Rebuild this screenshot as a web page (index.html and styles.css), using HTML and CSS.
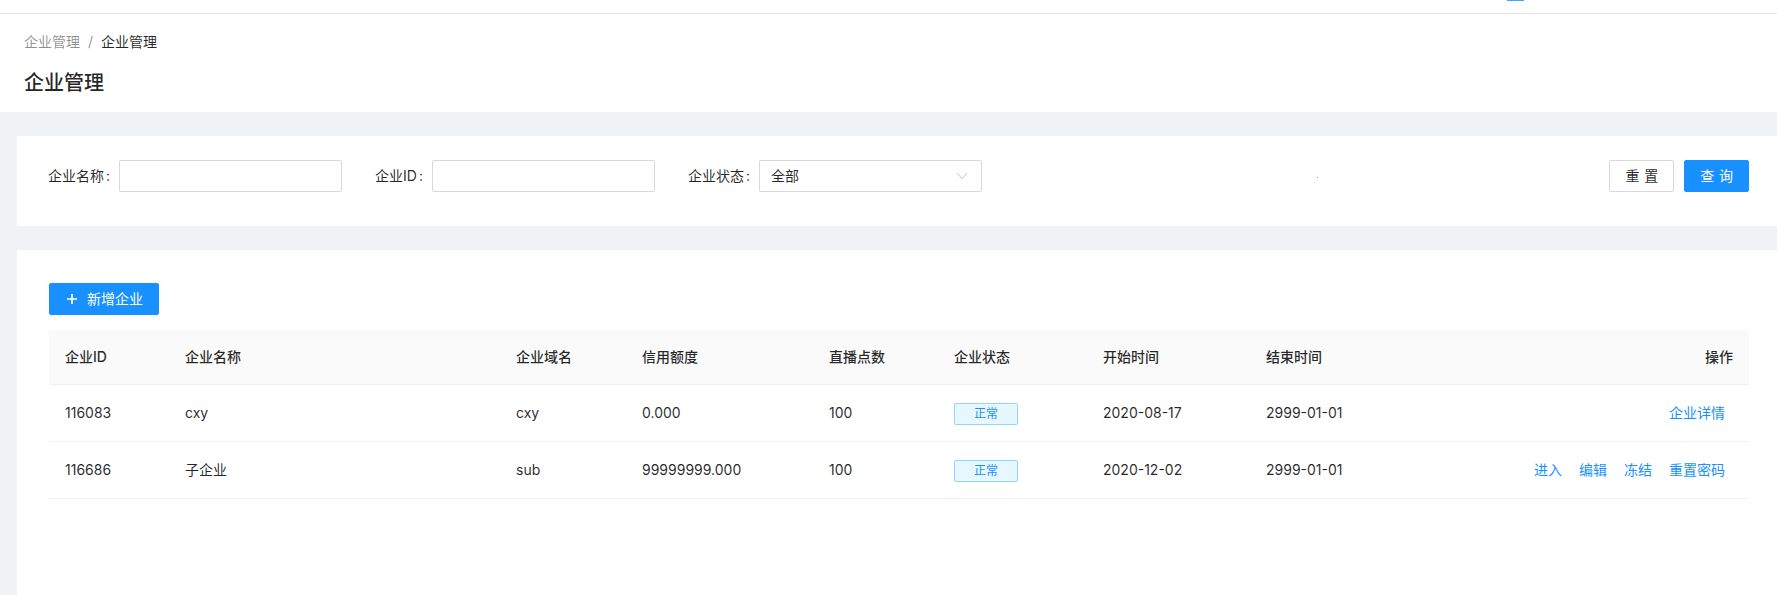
FILE: index.html
```html
<!DOCTYPE html>
<html lang="zh-CN">
<head>
<meta charset="utf-8">
<title>企业管理</title>
<link rel="stylesheet" href="styles.css">
</head>
<body>
<div class="topbar"><span class="nav-mark"></span></div>
<div class="page-header">
  <div class="breadcrumb">
    <span class="crumb">企业管理</span><span class="sep">/</span><span class="crumb current">企业管理</span>
  </div>
  <h1 class="title">企业管理</h1>
</div>
<main class="content">
  <section class="card filter-card">
    <div class="form-item">
      <label class="label">企业名称</label>
      <span class="input"></span>
    </div>
    <div class="form-item">
      <label class="label">企业ID</label>
      <span class="input"></span>
    </div>
    <div class="form-item">
      <label class="label">企业状态</label>
      <span class="input select"><span class="select-value">全部</span>
        <svg class="arrow" width="12" height="8" viewBox="0 0 12 8"><path d="M1 1.2 L6 6.6 L11 1.2" fill="none" stroke="#bfbfbf" stroke-width="1"/></svg>
      </span>
    </div>
    <span class="dot"></span>
    <div class="actions">
      <button class="btn"><span class="spaced">重置</span></button>
      <button class="btn primary"><span class="spaced">查询</span></button>
    </div>
  </section>
  <section class="card list-card">
    <button class="btn primary add-btn">
      <svg class="plus" width="14" height="14" viewBox="0 0 14 14"><path d="M7 2 V12 M2 7 H12" stroke="#fff" stroke-width="1.7" fill="none"/></svg>
      <span>新增企业</span>
    </button>
    <table class="table">
      <colgroup>
        <col style="width:120px"><col style="width:331px"><col style="width:126px"><col style="width:187px"><col style="width:125px"><col style="width:149px"><col style="width:163px"><col style="width:250px"><col>
      </colgroup>
      <thead>
        <tr>
          <th>企业ID</th><th>企业名称</th><th>企业域名</th><th>信用额度</th><th>直播点数</th><th>企业状态</th><th>开始时间</th><th>结束时间</th><th class="right">操作</th>
        </tr>
      </thead>
      <tbody>
        <tr>
          <td>116083</td><td>cxy</td><td>cxy</td><td>0.000</td><td>100</td><td><span class="tag">正常</span></td><td>2020-08-17</td><td>2999-01-01</td>
          <td class="right"><div class="ops"><a>企业详情</a></div></td>
        </tr>
        <tr>
          <td>116686</td><td>子企业</td><td>sub</td><td>99999999.000</td><td>100</td><td><span class="tag">正常</span></td><td>2020-12-02</td><td>2999-01-01</td>
          <td class="right"><div class="ops"><a>进入</a><a>编辑</a><a>冻结</a><a>重置密码</a></div></td>
        </tr>
      </tbody>
    </table>
  </section>
</main>
</body>
</html>
```
FILE: styles.css
```css
* { box-sizing: border-box; }
html, body { margin: 0; padding: 0; height: 100%; overflow: hidden; }
body {
  font-family: Inter, "Noto Sans CJK SC", sans-serif;
  font-size: 14px;
  line-height: 22px;
  color: rgba(0,0,0,0.85);
  background: #fff;
  display: flex;
  flex-direction: column;
}
.topbar {
  height: 14px;
  border-bottom: 1px solid #e4e4e4;
  display: flex;
  justify-content: flex-end;
  padding-right: 253px;
  flex: none;
}
.nav-mark { width: 17px; height: 1px; background: #40a9ff; }
.page-header { padding: 17px 24px 15px; flex: none; }
.breadcrumb { font-size: 14px; line-height: 22px; color: rgba(0,0,0,0.45); }
.breadcrumb .sep { margin: 0 8px; }
.breadcrumb .current { color: rgba(0,0,0,0.85); }
.title { margin: 16px 0 0; font-size: 20px; line-height: 28px; font-weight: 500; color: rgba(0,0,0,0.85); }
.content {
  background: #f0f2f5;
  padding: 24px 0 0 17px;
  flex: 1;
  display: flex;
  flex-direction: column;
  gap: 24px;
}
.card { background: #fff; }
.filter-card {
  display: flex;
  align-items: center;
  padding: 24px 28px 34px 31px;
}
.form-item { display: flex; align-items: center; margin-right: 33px; }
.label::after { content: ":"; margin: 0 9px 0 2px; }
.input {
  display: flex;
  align-items: center;
  width: 223px;
  height: 32px;
  border: 1px solid #d9d9d9;
  border-radius: 2px;
  background: #fff;
}
.select { width: 223px; padding: 0 11px; justify-content: space-between; }
.select-value { color: rgba(0,0,0,0.85); }
.arrow { margin-right: 2px; }
.dot { width: 1px; height: 1px; background: #9a9a9a; margin-left: 302px; margin-top: 2px; }
.actions { margin-left: auto; display: flex; gap: 10px; }
.btn {
  height: 32px;
  padding: 4px 15px;
  font: inherit;
  font-size: 14px;
  line-height: 22px;
  border: 1px solid #d9d9d9;
  border-radius: 2px;
  background: #fff;
  color: rgba(0,0,0,0.85);
  display: inline-flex;
  align-items: center;
  justify-content: center;
}
.btn .spaced { letter-spacing: 0.34em; margin-right: -0.34em; }
.btn.primary { background: #1890ff; border-color: #1890ff; color: #fff; }
.list-card { flex: 1; padding: 33px 28px 0 32px; }
.add-btn { gap: 8px; }
.table {
  margin-top: 15px;
  width: 100%;
  table-layout: fixed;
  border-collapse: separate;
  border-spacing: 0;
}
.table th {
  background: #fafafa;
  font-weight: 500;
  text-align: left;
  padding: 16px;
  border-bottom: 1px solid #f0f0f0;
  color: rgba(0,0,0,0.85);
}
.table td {
  padding: 17px 16px;
  border-bottom: 1px solid #f0f0f0;
  color: rgba(0,0,0,0.85);
  white-space: nowrap;
}
.table .right { text-align: right; }
.tag {
  display: inline-block;
  height: 22px;
  line-height: 20px;
  padding: 0 19px;
  margin: 1px 0 -1px;
  font-size: 12px;
  color: #1890ff;
  background: #e6f7ff;
  border: 1px solid #91d5ff;
  border-radius: 2px;
  vertical-align: top;
}
.ops { display: flex; justify-content: flex-end; gap: 17px; padding-right: 8px; }
.ops a { color: #1890ff; cursor: pointer; }
```
